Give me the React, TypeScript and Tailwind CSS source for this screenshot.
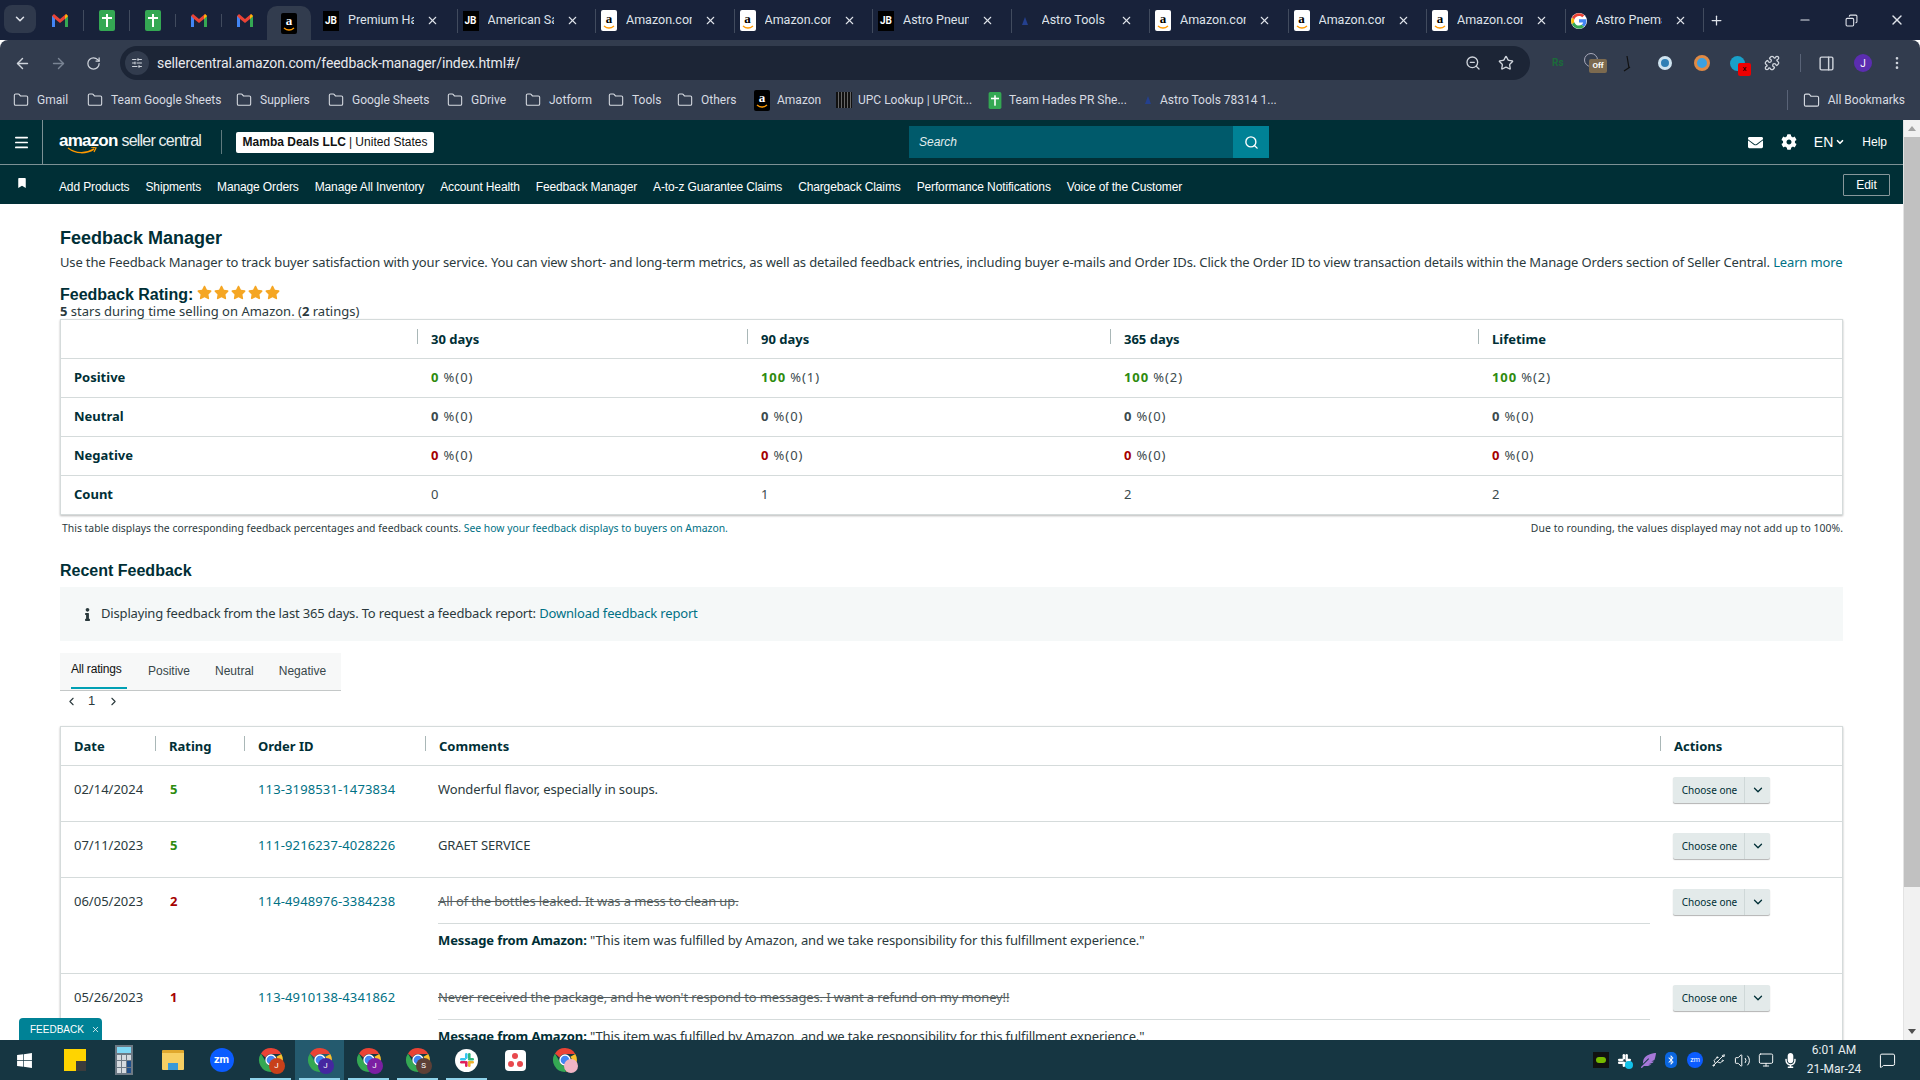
import React from "react";
import {
  ArrowLeft,
  ArrowRight,
  ChevronDown,
  ChevronLeft,
  ChevronRight,
  Copy,
  Folder,
  Minus,
  MoreVertical,
  PanelRight,
  Plus,
  Puzzle,
  RotateCw,
  Search,
  SlidersHorizontal,
  Star,
  X,
  ZoomOut,
  Menu,
  Usb,
  Volume2,
  Monitor,
  MessageSquare,
} from "lucide-react";
import {
  FaBluetoothB,
  FaBookmark,
  FaCog,
  FaEnvelope,
  FaFeatherAlt,
  FaInfo,
  FaMicrophone,
  FaStar,
  FaWindows,
} from "react-icons/fa";

const Gmail = () => (
  <svg width="16" height="13" viewBox="0 0 16 13">
    <path d="M0 2v11h3V5l5 4 5-4v8h3V2l-2-2-6 5-6-5z" fill="#ea4335" />
    <path d="M0 2v11h3V5z" fill="#4285f4" />
    <path d="M13 5v8h3V2z" fill="#34a853" />
    <path d="M14 0l2 2-3 3V2z" fill="#fbbc05" />
  </svg>
);

const Sheets = () => (
  <div className="w-[16px] h-[21px] bg-[#34a853] rounded-[2px] flex items-center justify-center relative">
    <div className="absolute w-[2px] h-[13px] bg-white" />
    <div className="absolute w-[10px] h-[2px] bg-white top-[7px]" />
  </div>
);

const AmazonFav = ({ dark }: { dark?: boolean }) => (
  <div
    className={`w-[16px] h-[21px] rounded-[2px] flex flex-col items-center justify-center leading-none ${dark ? "bg-black text-white" : "bg-white text-black"}`}
  >
    <span className="text-[13px] font-bold leading-[12px] font-['Liberation_Serif',serif]">a</span>
    <svg width="12" height="4" viewBox="0 0 12 4">
      <path d="M1 1c3 2.500 7 2.500 10 0" stroke="#ff9900" strokeWidth="1.400" fill="none" />
    </svg>
  </div>
);

const JB = () => (
  <div className="w-[16px] h-[20px] bg-black text-white text-[10px] font-bold flex items-center justify-center leading-none">
    JB
  </div>
);

const AstroDot = () => (
  <svg width="10" height="12" viewBox="0 0 10 12">
    <path d="M5 2l3 8H2z" fill="#24408e" />
  </svg>
);

const Google = () => (
  <svg width="16" height="16" viewBox="0 0 48 48">
    <path fill="#fff" d="M24 0a24 24 0 100 48 24 24 0 000-48z" />
    <path fill="#ea4335" d="M24 9c4 0 7 1.400 10 4l6-6C36 3 30 1 24 1 15 1 7 6 3 14l7 5.500C12 13.500 17.500 9 24 9z" />
    <path fill="#4285f4" d="M46 24c0-1.700-.2-3.300-.5-5H24v9.500h12.500c-.6 3-2.200 5.400-4.700 7l7.300 5.700C43.400 37.200 46 31 46 24z" />
    <path fill="#fbbc05" d="M10 28.500a14 14 0 010-9L3 14a23 23 0 000 20z" />
    <path fill="#34a853" d="M24 47c6.200 0 11.400-2 15.100-5.800l-7.300-5.700c-2 1.400-4.600 2.200-7.800 2.200-6.500 0-12-4.400-14-10.200L3 33.900C7 41.900 15 47 24 47z" />
  </svg>
);

const ChromeLogo = ({ size = 34 }: { size?: number }) => (
  <svg width={size} height={size} viewBox="0 0 48 48">
    <path fill="#ea4335" d="M24 2a22 22 0 0119 11H24a11 11 0 00-10 6.500L5.500 12A22 22 0 0124 2z" />
    <path fill="#fbc02d" d="M43 13a22 22 0 01-17 33l9.500-16.500A11 11 0 0034 18z" />
    <path fill="#34a853" d="M5.500 12l9.500 16.500A11 11 0 0026 35l-1 11A22 22 0 015.500 12z" />
    <circle cx="24" cy="24" r="10.500" fill="#fff" />
    <circle cx="24" cy="24" r="8" fill="#4285f4" />
  </svg>
);

// four colour slack mark, mono is for the tray
const SlackMark = ({ size = 16, mono }: { size?: number; mono?: boolean }) => (
  <svg width={size} height={size} viewBox="0 0 16 16">
    <rect x="1" y="6" width="6" height="2.600" rx="1.300" fill={mono ? "#fff" : "#36c5f0"} />
    <rect x="6" y="1" width="2.600" height="6" rx="1.300" fill={mono ? "#fff" : "#36c5f0"} />
    <rect x="9" y="1" width="2.600" height="6" rx="1.300" fill={mono ? "#fff" : "#2eb67d"} />
    <rect x="9" y="6" width="6" height="2.600" rx="1.300" fill={mono ? "#fff" : "#2eb67d"} />
    <rect x="9" y="9" width="6" height="2.600" rx="1.300" fill={mono ? "#fff" : "#ecb22e"} />
    <rect x="9" y="9" width="2.600" height="6" rx="1.300" fill={mono ? "#fff" : "#ecb22e"} />
    <rect x="1" y="9" width="6" height="2.600" rx="1.300" fill={mono ? "#fff" : "#e01e5a"} />
    <rect x="6" y="9" width="2.600" height="6" rx="1.300" fill={mono ? "#fff" : "#e01e5a"} />
  </svg>
);

const tabs = [
  { icon: <JB />, title: "Premium Hair" },
  { icon: <JB />, title: "American Safe" },
  { icon: <AmazonFav />, title: "Amazon.com" },
  { icon: <AmazonFav />, title: "Amazon.com" },
  { icon: <JB />, title: "Astro Pneum" },
  { icon: <AstroDot />, title: "Astro Tools 7" },
  { icon: <AmazonFav />, title: "Amazon.com" },
  { icon: <AmazonFav />, title: "Amazon.com" },
  { icon: <AmazonFav />, title: "Amazon.com" },
  { icon: <Google />, title: "Astro Pnema" },
];

const bookmarks = [
  { label: "Gmail", w: "w-[74px]" },
  { label: "Team Google Sheets", w: "w-[149px]" },
  { label: "Suppliers", w: "w-[92px]" },
  { label: "Google Sheets", w: "w-[119px]" },
  { label: "GDrive", w: "w-[78px]" },
  { label: "Jotform", w: "w-[83px]" },
  { label: "Tools", w: "w-[69px]" },
  { label: "Others", w: "w-[77px]" },
];

const navLinks = [
  "Add Products",
  "Shipments",
  "Manage Orders",
  "Manage All Inventory",
  "Account Health",
  "Feedback Manager",
  "A-to-z Guarantee Claims",
  "Chargeback Claims",
  "Performance Notifications",
  "Voice of the Customer",
];

const summary = [
  { label: "Positive", color: "text-[#2e8b0e]", vals: ["0", "100", "100", "100"], counts: [0, 1, 2, 2] },
  { label: "Neutral", color: "text-[#3b4a4d]", vals: ["0", "0", "0", "0"], counts: [0, 0, 0, 0] },
  { label: "Negative", color: "text-[#a50000]", vals: ["0", "0", "0", "0"], counts: [0, 0, 0, 0] },
];

const summaryGrid = "grid grid-cols-[356px_330px_363px_368px_1fr]";
const feedbackGrid = "grid grid-cols-[94px_89px_181px_1235px_1fr]";

const feedback = [
  { date: "02/14/2024", rating: 5, order: "113-3198531-1473834", comment: "Wonderful flavor, especially in soups." },
  { date: "07/11/2023", rating: 5, order: "111-9216237-4028226", comment: "GRAET SERVICE" },
  { date: "06/05/2023", rating: 2, order: "114-4948976-3384238", comment: "All of the bottles leaked. It was a mess to clean up.", struck: true },
  { date: "05/26/2023", rating: 1, order: "113-4910138-4341862", comment: "Never received the package, and he won't respond to messages. I want a refund on my money!!", struck: true },
];

const HeadCell = ({ children, first }: { children?: React.ReactNode; first?: boolean }) => (
  <div className={`h-[38px] flex items-center relative pt-[2px] ${first ? "pl-[13px]" : "pl-[14px]"}`}>
    {!first && <div className="absolute left-0 top-[9px] h-[15px] w-px bg-[#a9b7b7]" />}
    <span className="font-bold text-[#002f36]">{children}</span>
  </div>
);

const ChooseOne = () => (
  <div className="w-[97px] h-[26px] bg-[#e3eaea] rounded-[2px] shadow-[0_1px_1px_rgba(0,0,0,0.3)] flex items-center">
    <div className="w-[72px] h-full flex items-center justify-center pl-[2px] text-[10px] text-[#002f36] border-r border-[#cfd8d8]">
      Choose one
    </div>
    <div className="flex-1 flex justify-center text-[#002f36]">
      <ChevronDown size={14} strokeWidth={2.2} />
    </div>
  </div>
);

const BrowserChrome = () => (
  <div className="shrink-0 font-['Roboto',sans-serif]">
    {/* tab strip */}
    <div className="h-[40px] bg-[#18223a] flex items-center pl-[4px] text-[12px] text-[#dfe3ea]">
      <div className="w-[32px] h-[28px] mb-[2px] rounded-[8px] bg-[#2f394c] flex items-center justify-center">
        <ChevronDown size={14} strokeWidth={2.6} />
      </div>
      <div className="w-[1px]" />
      <div className="w-[46px] flex justify-center"><Gmail /></div>
      <div className="w-[46px] flex justify-center border-l border-[#414b5e]"><Sheets /></div>
      <div className="w-[46px] flex justify-center border-l border-[#414b5e]"><Sheets /></div>
      <div className="w-[46px] flex justify-center border-l border-[#414b5e]"><Gmail /></div>
      <div className="w-[46px] flex justify-center border-l border-[#414b5e]"><Gmail /></div>
      <div className="w-[44px] h-[34px] self-end bg-[#323c4e] rounded-t-[10px] flex items-center justify-center">
        <AmazonFav dark />
      </div>
      <div className="w-[7px]" />
      {tabs.map((t, i) => (
        <div
          key={i}
          className={`w-[138.5px] h-[24px] mt-[1px] flex items-center pl-[4px] ${i > 0 ? "border-l border-[#414b5e]" : ""}`}
        >
          <div className="w-[18px] flex justify-center shrink-0">{t.icon}</div>
          <div className="w-[66px] ml-[8px] overflow-hidden whitespace-nowrap text-[12.5px]">{t.title}</div>
          <X size={13} className="ml-[12px] shrink-0" />
        </div>
      ))}
      <div className="border-l border-[#414b5e] h-[24px] flex items-center pl-[5px]">
        <Plus size={15} />
      </div>
      <div className="ml-auto flex items-center">
        <div className="w-[46px] flex justify-center"><Minus size={14} /></div>
        <div className="w-[46px] flex justify-center"><Copy size={13} className="scale-x-[-1]" /></div>
        <div className="w-[46px] flex justify-center"><X size={16} /></div>
      </div>
    </div>
    {/* toolbar */}
    <div className="h-[40px] bg-[#323c4e] rounded-t-[8px] flex items-end text-[#cfd4dc]">
      <div className="w-[122px] h-[34px] flex items-center pl-[14px] gap-[19px]">
        <ArrowLeft size={17} />
        <ArrowRight size={17} className="text-[#7a8494]" />
        <RotateCw size={15} />
      </div>
      <div className="w-[1410px] -ml-[2px] h-[34px] rounded-full bg-[#1c2536] flex items-center pl-[5px] pr-[16px]">
        <div className="w-[24px] h-[24px] rounded-full bg-[#323c4e] flex items-center justify-center">
          <SlidersHorizontal size={12} />
        </div>
        <span className="ml-[8px] text-[14px] tracking-[-0.1px] text-[#e8eaee]">sellercentral.amazon.com/feedback-manager/index.html#/</span>
        <div className="ml-auto flex items-center gap-[17px]">
          <ZoomOut size={16} />
          <Star size={16} />
        </div>
      </div>
      <div className="flex-1 h-[34px] flex items-center pl-[22px] relative">
        <span className="w-[32px] text-[10px] font-bold text-[#1c6b3a] leading-none">Rs</span>
        <div className="w-[36px] relative h-[20px]">
          <div className="w-[14px] h-[14px] border border-[#aab] rounded-full" />
          <span className="absolute left-[5px] top-[6px] w-[18px] h-[14px] bg-[#7c6a4f] rounded-[2px] text-[8px] font-bold text-white flex items-center justify-center">Off</span>
        </div>
        <svg width="38" height="18" viewBox="0 0 38 18"><path d="M4 17l6-4M9 14L7 2" stroke="#111" strokeWidth="1.200" fill="none" /></svg>
        <div className="w-[36px]"><div className="w-[14px] h-[14px] rounded-full bg-[#2f7fb5] border-[3px] border-[#cfe3ef]" /></div>
        <div className="w-[36px]"><div className="w-[16px] h-[16px] rounded-full bg-[#3ba0e0] border-[3px] border-[#e08a45]" /></div>
        <div className="w-[32px] relative">
          <div className="w-[15px] h-[15px] rounded-full bg-[#19a0c9]" />
          <span className="absolute left-[8px] top-[7px] w-[13px] h-[13px] bg-[#ee0000] rounded-[2px] text-[8px] text-black flex items-center justify-center">x</span>
        </div>
        <Puzzle size={16} className="ml-[2px]" />
        <div className="w-px h-[18px] bg-[#596377] ml-[20px]" />
        <PanelRight size={17} className="ml-[17px]" />
        <div className="w-[18px] h-[18px] ml-[19px] rounded-full bg-[#5b2db0] text-[10px] text-white flex items-center justify-center">J</div>
        <MoreVertical size={16} className="ml-[17px]" />
      </div>
    </div>
    {/* bookmarks */}
    <div className="h-[40px] bg-[#323c4e] flex items-center text-[12px] text-[#d7dbe2] pl-[13px]">
      {bookmarks.map((b) => (
        <div key={b.label} className={`flex items-center gap-[8px] shrink-0 whitespace-nowrap ${b.w}`}>
          <Folder size={16} strokeWidth={1.6} />
          {b.label}
        </div>
      ))}
      <div className="flex items-center gap-[7px] w-[82px] whitespace-nowrap">
        <AmazonFav dark />
        Amazon
      </div>
      <div className="flex items-center gap-[6px] w-[151px] whitespace-nowrap">
        <div className="w-[16px] h-[16px] bg-[repeating-linear-gradient(90deg,#111_0_2px,#666_2px_3px)]" />
        UPC Lookup | UPCit...
      </div>
      <div className="flex items-center gap-[6px] w-[156px] whitespace-nowrap">
        <div className="scale-[0.8]"><Sheets /></div>
        Team Hades PR She...
      </div>
      <div className="flex items-center gap-[7px] whitespace-nowrap">
        <AstroDot />
        Astro Tools 78314 1...
      </div>
      <div className="ml-auto flex items-center gap-[8px] mr-[15px]">
        <div className="w-px h-[20px] bg-[#596377] mr-[7px]" />
        <Folder size={17} strokeWidth={1.6} />
        All Bookmarks
      </div>
    </div>
  </div>
);

const SellerNav = () => (
  <div className="shrink-0 bg-[#002f36] font-['Liberation_Sans',sans-serif] text-white">
    <div className="h-[45px] flex items-center border-b border-[#7d9195]">
      <div className="w-[43px] h-full flex items-center justify-center border-r border-[#7d9195]">
        <Menu size={17} strokeWidth={2.4} />
      </div>
      <div className="ml-[16px] w-[144px] relative h-[30px] whitespace-nowrap flex items-baseline pt-[1px]">
        <span className="text-[17px] font-bold tracking-[-0.8px]">amazon</span>
        <span className="text-[16px] ml-[4px] tracking-[-0.8px] text-[#e8eeee]">seller central</span>
        <svg className="absolute left-[8px] top-[20px]" width="30" height="9" viewBox="0 0 30 9">
          <path d="M1 1c8 6 18 6 26 1" stroke="#ff9900" strokeWidth="1.500" fill="none" />
          <path d="M24 0l5 1-2 4" stroke="#ff9900" strokeWidth="1.200" fill="none" />
        </svg>
      </div>
      <div className="ml-[18px] w-px h-[24px] bg-[#5f7a7e]" />
      <div className="ml-[14px] w-[198px] h-[21px] bg-white rounded-[2px] text-[#0f1111] text-[12px] flex items-center justify-center whitespace-nowrap">
        <span className="font-bold">Mamba Deals LLC</span>
        <span className="ml-[3px]">| United States</span>
      </div>
      <div className="ml-[475px] w-[360px] h-[32px] flex">
        <div className="flex-1 bg-[#005a6b] flex items-center pl-[10px] text-[12px] italic text-[#e4eeee]">Search</div>
        <div className="w-[36px] bg-[#008296] flex items-center justify-center">
          <Search size={15} strokeWidth={2.2} />
        </div>
      </div>
      <div className="ml-auto flex items-center pr-[16px] text-[12px]">
        <FaEnvelope size={15} />
        <FaCog size={16} className="ml-[18px]" />
        <span className="ml-[17px] text-[14px]">EN</span>
        <ChevronDown size={10} strokeWidth={4} className="ml-[2px]" />
        <span className="ml-[17px]">Help</span>
      </div>
    </div>
    <div className="h-[39px] flex items-center text-[12px] relative">
      <FaBookmark size={10} className="ml-[17px] -mt-[3px]" />
      <div className="ml-[32px] pt-[4px] flex items-center gap-[16px] whitespace-nowrap tracking-[-0.13px]">
        {navLinks.map((n) => (
          <span key={n}>{n}</span>
        ))}
      </div>
      <div className="ml-auto mr-[13px] w-[47px] h-[22px] border border-[#87979a] rounded-[1px] flex items-center justify-center">Edit</div>
    </div>
  </div>
);

const FeedbackSummary = () => (
  <div className="mt-[2px] bg-white border border-[#d5dbdb] shadow-[0_1px_2px_rgba(0,0,0,0.28)]">
    <div className={summaryGrid}>
      <HeadCell first />
      <HeadCell>30 days</HeadCell>
      <HeadCell>90 days</HeadCell>
      <HeadCell>365 days</HeadCell>
      <HeadCell>Lifetime</HeadCell>
    </div>
    {summary.map((r) => (
      <div key={r.label} className={`${summaryGrid} h-[39px] items-center border-t border-[#d5dbdb]`}>
        <div className="pl-[13px] font-bold text-[#002f36]">{r.label}</div>
        {r.vals.map((v, i) => (
          <div key={i} className="pl-[14px] text-[#3b4a4d] tracking-[0.9px]">
            <span className={`font-bold ${r.color}`}>{v}</span> %({r.counts[i]})
          </div>
        ))}
      </div>
    ))}
    <div className={`${summaryGrid} h-[39px] items-center border-t border-[#d5dbdb]`}>
      <div className="pl-[13px] font-bold text-[#002f36]">Count</div>
      {[0, 1, 2, 2].map((c, i) => (
        <div key={i} className="pl-[14px] text-[#3b4a4d]">{c}</div>
      ))}
    </div>
  </div>
);

const FeedbackTable = () => (
  <div className="mt-[14px] bg-white border border-[#d5dbdb] border-b-0 shadow-[0_1px_2px_rgba(0,0,0,0.28)]">
    <div className={feedbackGrid}>
      <HeadCell first>Date</HeadCell>
      <HeadCell>Rating</HeadCell>
      <HeadCell>Order ID</HeadCell>
      <HeadCell>Comments</HeadCell>
      <HeadCell>Actions</HeadCell>
    </div>
    {feedback.map((f) => (
      <div key={f.order} className={`${feedbackGrid} border-t border-[#d5dbdb] pt-[14px] ${f.struck ? "pb-[24px]" : "pb-[23px]"}`}>
        <div className="pl-[13px] text-[#2b3a3d] leading-[18px]">{f.date}</div>
        <div className={`pl-[15px] font-bold leading-[18px] ${f.rating > 3 ? "text-[#2e8b0e]" : "text-[#a50000]"}`}>{f.rating}</div>
        <div className="pl-[14px] text-[#007185] leading-[18px] tracking-[0.13px]">{f.order}</div>
        <div className="pl-[13px] pr-[10px] leading-[18px] tracking-[-0.12px]">
          <div className={f.struck ? "line-through text-[#565f61]" : "text-[#2b3a3d]"}>{f.comment}</div>
          {f.struck && (
            <div className="mt-[13px] pt-[7px] border-t border-[#d5dbdb] text-[#2b3a3d]">
              <span className="font-bold text-[#002f36]">Message from Amazon:</span>{" "}
              "This item was fulfilled by Amazon, and we take responsibility for this fulfillment experience."
            </div>
          )}
        </div>
        <div className="pl-[13px] -mt-[3px] h-[18px]"><ChooseOne /></div>
      </div>
    ))}
  </div>
);

const Scrollbar = () => (
  <div className="w-[17px] shrink-0 bg-[#f1f1f1] flex flex-col items-center border-l border-[#e3e3e3]">
    <div className="h-[17px] flex items-center justify-center">
      <div className="w-0 h-0 border-x-[4px] border-x-transparent border-b-[5px] border-b-[#a3a3a3]" />
    </div>
    <div className="w-full h-[750px] bg-[#c1c1c1]" />
    <div className="mt-auto h-[17px] flex items-center justify-center">
      <div className="w-0 h-0 border-x-[4px] border-x-transparent border-t-[5px] border-t-[#505050]" />
    </div>
  </div>
);

const Taskbar = () => {
  const chromes = [
    { letter: "J", bg: "bg-[#c8401a]" },
    { letter: "J", bg: "bg-[#4527a0]", active: true },
    { letter: "J", bg: "bg-[#7b1fa2]" },
    { letter: "S", bg: "bg-[#5d4037]" },
  ];
  return (
    <div className="h-[40px] shrink-0 bg-[#163642] flex items-center text-white font-['Roboto',sans-serif] relative">
      <div className="w-[48px] flex justify-center"><FaWindows size={17} /></div>
      <div className="w-[49px] ml-[2px] flex justify-center">
        <div className="w-[22px] h-[22px] bg-[#ffd400] relative">
          <div className="absolute right-0 bottom-0 w-[10px] h-[10px] bg-[#3c3c3c]" />
        </div>
      </div>
      <div className="w-[49px] flex justify-center">
        <div className="w-[18px] h-[30px] bg-[#6d7a85] p-[2px] flex flex-col gap-[2px]">
          <div className="h-[6px] bg-[#7fd8f5]" />
          <div className="grid grid-cols-3 gap-[1px] flex-1">
            {Array.from({ length: 9 }).map((_, i) => (
              <div key={i} className={i % 3 === 2 && i > 2 ? "bg-[#1f4f8a]" : "bg-[#d5dbe0]"} />
            ))}
          </div>
        </div>
      </div>
      <div className="w-[49px] flex justify-center">
        <div className="w-[22px] h-[20px] bg-[#f7cf63] rounded-[1px] relative border-t-[3px] border-[#e0a82e]">
          <div className="absolute bottom-0 left-[6px] w-[10px] h-[7px] bg-[#3a9ad9]" />
        </div>
      </div>
      <div className="w-[49px] flex justify-center">
        <div className="w-[24px] h-[24px] rounded-full bg-[#0b5cff] text-[11px] font-bold flex items-center justify-center">zm</div>
      </div>
      {chromes.map((c, i) => (
        <div key={i} className={`w-[49px] h-full flex items-center justify-center relative ${c.active ? "bg-[#245a6e]" : ""}`}>
          <div className="relative w-[26px] h-[26px]">
            <ChromeLogo size={26} />
            <span className={`absolute left-[11px] top-[11px] w-[16px] h-[16px] rounded-full ${c.bg} text-[8px] flex items-center justify-center`}>{c.letter}</span>
          </div>
          <div className="absolute bottom-0 left-[4px] right-[4px] h-[2px] bg-[#8fd3ea]" />
        </div>
      ))}
      <div className="w-[49px] h-full flex items-center justify-center relative">
        <div className="w-[23px] h-[23px] rounded-full bg-white flex items-center justify-center"><SlackMark size={16} /></div>
        <div className="absolute bottom-0 left-[4px] right-[4px] h-[2px] bg-[#8fd3ea]" />
      </div>
      <div className="w-[49px] flex justify-center">
        <div className="w-[21px] h-[21px] rounded-[4px] bg-white relative">
          <span className="absolute left-[7px] top-[3px] w-[6px] h-[6px] rounded-full bg-[#e8484d]" />
          <span className="absolute left-[3px] top-[11px] w-[6px] h-[6px] rounded-full bg-[#e8484d]" />
          <span className="absolute left-[12px] top-[11px] w-[6px] h-[6px] rounded-full bg-[#e8484d]" />
        </div>
      </div>
      <div className="w-[49px] flex justify-center">
        <div className="relative w-[26px] h-[26px]">
          <ChromeLogo size={26} />
          <span className="absolute left-[12px] top-[12px] w-[14px] h-[14px] rounded-full bg-[#f0b5c5]" />
        </div>
      </div>
      <div className="ml-auto flex items-center h-full pr-[24px]">
        <div className="w-[16px] h-[16px] bg-[#111] flex items-center justify-center mr-[8px]">
          <div className="w-[10px] h-[6px] rounded-full bg-[#76b900]" />
        </div>
        <div className="relative mr-[9px] w-[15px] h-[15px]">
          <SlackMark size={15} mono />
          <span className="absolute left-[8px] top-[8px] w-[8px] h-[8px] rounded-full bg-[#12c2e9]" />
        </div>
        <FaFeatherAlt size={15} className="text-[#a678d8] mr-[9px]" />
        <div className="w-[12px] h-[16px] rounded-[5px] bg-[#0a66e0] flex items-center justify-center mr-[10px]"><FaBluetoothB size={10} /></div>
        <div className="w-[16px] h-[16px] rounded-full bg-[#0b5cff] text-[7px] flex items-center justify-center mr-[8px]">zm</div>
        <Usb size={15} strokeWidth={1.4} className="mr-[8px]" />
        <Volume2 size={17} strokeWidth={1.4} className="mr-[7px]" />
        <Monitor size={16} strokeWidth={1.4} className="mr-[9px]" />
        <FaMicrophone size={15} className="mr-[4px]" />
        <div className="w-[64px] text-center text-[12px] leading-[19px] text-[#e8eef0]">
          <div>6:01 AM</div>
          <div>21-Mar-24</div>
        </div>
        <MessageSquare size={17} strokeWidth={1.4} className="ml-[13px]" />
      </div>
    </div>
  );
};

export default function App() {
  return (
    <div className="h-screen w-screen overflow-hidden flex flex-col bg-white">
      <BrowserChrome />
      <div className="flex-1 flex min-h-0 relative">
        <div className="flex-1 min-w-0 flex flex-col overflow-hidden">
          <SellerNav />
          <div className="pl-[60px] pr-[60px] text-[13px] text-[#0f1111] font-['Noto_Sans',sans-serif]">
            <h1 className="mt-[24px] text-[18px] leading-[20px] font-bold text-[#002f36] font-['Liberation_Sans',sans-serif]">Feedback Manager</h1>
            <p className="mt-[4px] leading-[20px] whitespace-nowrap text-[#2b3a3d] tracking-[-0.145px]">
              Use the Feedback Manager to track buyer satisfaction with your service. You can view short- and long-term metrics, as well as detailed feedback entries, including buyer e-mails and Order IDs. Click the Order ID to view transaction details within the Manage Orders section of Seller Central.{" "}
              <span className="text-[#007185]">Learn more</span>
            </p>
            <div className="mt-[13px] flex items-center h-[20px]">
              <span className="text-[16px] font-bold text-[#002f36] font-['Liberation_Sans',sans-serif]">Feedback Rating:</span>
              <div className="ml-[4px] flex gap-[2px] -mt-[5px]">
                {[0, 1, 2, 3, 4].map((i) => (
                  <FaStar key={i} size={15} className="text-[#f5a623]" />
                ))}
              </div>
            </div>
            <div className="leading-[12px] text-[#2b3a3d]">
              <b>5</b> stars during time selling on Amazon. (<b>2</b> ratings)
            </div>
            <FeedbackSummary />
            <div className="mt-[6px] pl-[2px] flex justify-between text-[10.4px] text-[#2b3a3d] leading-[14px]">
              <span>
                This table displays the corresponding feedback percentages and feedback counts.{" "}
                <span className="text-[#007185]">See how your feedback displays to buyers on Amazon.</span>
              </span>
              <span className="tracking-[0.05px]">Due to rounding, the values displayed may not add up to 100%.</span>
            </div>
            <h2 className="mt-[26px] text-[16px] leading-[20px] font-bold text-[#002f36] font-['Liberation_Sans',sans-serif]">Recent Feedback</h2>
            <div className="mt-[6px] h-[54px] bg-[#f5f8f8] flex items-center pl-[21px]">
              <FaInfo size={13} className="text-[#2b3a3d]" />
              <span className="ml-[7px] text-[#2b3a3d] tracking-[-0.17px]">
                Displaying feedback from the last 365 days. To request a feedback report:{" "}
                <span className="text-[#007185]">Download feedback report</span>
              </span>
            </div>
            <div className="mt-[12px] w-[281px] h-[38px] bg-[#f7f8f8] border-b border-[#c4c8c8] flex items-end pl-[11px] gap-[25px] text-[12px] text-[#37474a] font-['Liberation_Sans',sans-serif]">
              <span className="h-[36px] pt-[7px] border-b-2 border-[#00a0b4] text-[#0f1111] w-[56px] mb-[1px] tracking-[-0.2px]">All ratings</span>
              <span className="h-[36px] pt-[8px] -ml-[4px]">Positive</span>
              <span className="h-[36px] pt-[8px]">Neutral</span>
              <span className="h-[36px] pt-[8px]">Negative</span>
            </div>
            <div className="h-[21px] flex items-center pl-[5px] text-[#2b3a3d]">
              <ChevronLeft size={13} strokeWidth={2} />
              <span className="ml-[10px] font-['Liberation_Sans',sans-serif] -mt-[2px]">1</span>
              <ChevronRight size={13} strokeWidth={2} className="ml-[12px]" />
            </div>
            <FeedbackTable />
          </div>
        </div>
        <Scrollbar />
      </div>
      <Taskbar />
      <div className="absolute left-[19px] top-[1018px] w-[83px] h-[22px] pt-[1px] bg-[#008296] rounded-t-[4px] text-white text-[10px] font-['Liberation_Sans',sans-serif] flex items-center pl-[11px] gap-[7px]">
        FEEDBACK
        <X size={9} />
      </div>
    </div>
  );
}
